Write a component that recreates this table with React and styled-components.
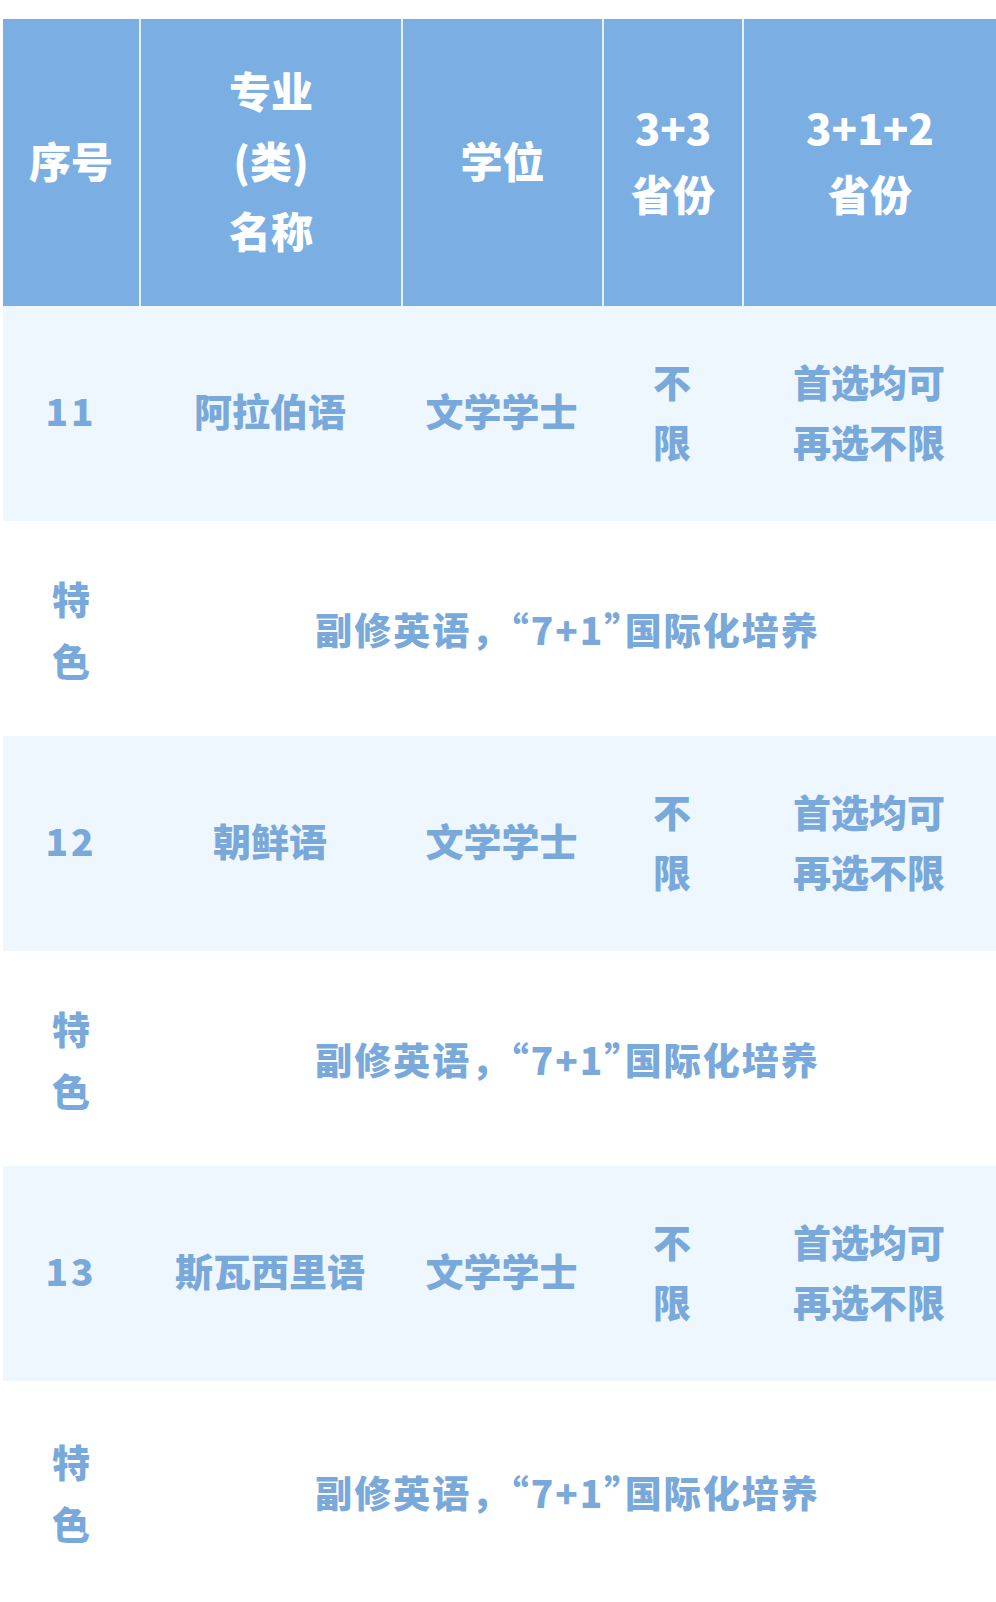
import styled, { createGlobalStyle } from 'styled-components'

const GlobalStyle = createGlobalStyle`
  html, body {
    margin: 0;
    padding: 0;
    background: #ffffff;
  }
  body {
    font-family: "Noto Sans CJK SC", "Noto Sans", sans-serif;
  }
`

const Page = styled.div`
  width: 996px;
  min-height: 1602px;
  padding: 19px 0 0 3px;
  box-sizing: border-box;
  background: #ffffff;
`

const COLS = '136px 262px 201px 140px 254px'

const HeaderRow = styled.div`
  display: grid;
  grid-template-columns: ${COLS};
  height: 287px;
  background: #7bafe4;
`

const HeadCell = styled.div`
  display: flex;
  align-items: center;
  justify-content: center;
  padding-bottom: 6px;
  text-align: center;
  color: #ffffff;
  font-size: 42px;
  font-weight: 900;
  line-height: ${p => p.$lh || 70}px;
  border-left: ${p => (p.$first ? 'none' : '2px solid #e4f0fb')};
  white-space: pre-line;
`

const DataRow = styled.div`
  display: grid;
  grid-template-columns: ${COLS};
  height: 215px;
  background: #eff7fe;
`

const FeatureRow = styled.div`
  display: grid;
  grid-template-columns: ${COLS};
  height: ${p => p.$h || 215}px;
  background: #ffffff;
`

const Cell = styled.div`
  display: flex;
  align-items: center;
  justify-content: center;
  padding-bottom: ${p => p.$lift || 0}px;
  text-align: center;
  color: #79a8da;
  font-size: 38px;
  font-weight: 900;
  line-height: ${p => p.$lh || 60}px;
  white-space: pre-line;
  grid-column: ${p => p.$span || 'auto'};
`

const Num = styled(Cell)`
  font-size: 37px;
  letter-spacing: 3px;
`

const Feature = styled(Cell)`
  font-size: 37px;
  letter-spacing: 2px;
`

// closing quote set half-width, as in the reference
const CloseQuote = styled.span`
  font-feature-settings: "halt";
`

const rows = [
  { no: '11', name: '阿拉伯语' },
  { no: '12', name: '朝鲜语' },
  { no: '13', name: '斯瓦西里语' },
]

export default function App() {
  return (
    <>
      <GlobalStyle />
      <Page>
        <HeaderRow>
          <HeadCell $first>序号</HeadCell>
          <HeadCell>{'专业\n(类)\n名称'}</HeadCell>
          <HeadCell>学位</HeadCell>
          <HeadCell $lh={66}>{'3+3\n省份'}</HeadCell>
          <HeadCell $lh={66}>{'3+1+2\n省份'}</HeadCell>
        </HeaderRow>
        {rows.map((r, i) => (
          <div key={r.no}>
            <DataRow>
              <Num $lift={8}>{r.no}</Num>
              <Cell $lift={8}>{r.name}</Cell>
              <Cell $lift={8}>文学学士</Cell>
              <Cell $lift={6}>{'不\n限'}</Cell>
              <Cell $lift={6}>{'首选均可\n再选不限'}</Cell>
            </DataRow>
            <FeatureRow $h={i === rows.length - 1 ? 221 : 215}>
              <Cell $lh={62}>{'特\n色'}</Cell>
              <Feature $span="span 4" $lh={40}>
                <span>
                  副修英语，“7+1<CloseQuote>”</CloseQuote>国际化培养
                </span>
              </Feature>
            </FeatureRow>
          </div>
        ))}
      </Page>
    </>
  )
}
